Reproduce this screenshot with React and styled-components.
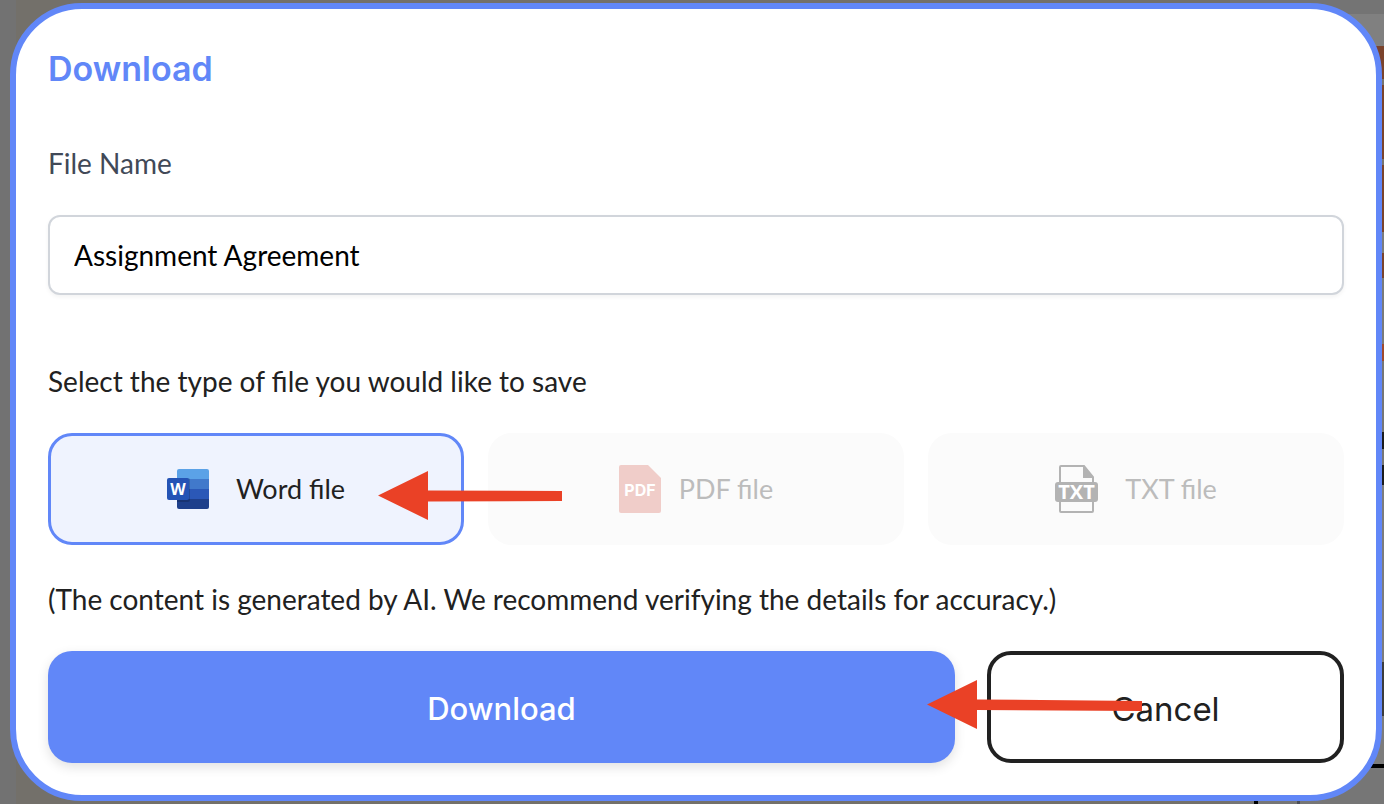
import React from 'react'
import styled, { createGlobalStyle, ThemeProvider } from 'styled-components'

const theme = {
  colors: {
    primary: '#6187f8',
    soft: '#eff3fe',
    text: '#212121',
    label: '#414957',
    border: '#d1d5db',
    arrow: '#ea4126',
  },
  body: 'Lato, "Open Sans", sans-serif',
  heading: 'Inter, Roboto, sans-serif',
}

const GlobalStyle = createGlobalStyle`
  * { box-sizing: border-box; }
  body {
    margin: 0;
    background: #73706a;
    font-family: ${({ theme }) => theme.body};
    color: ${({ theme }) => theme.colors.text};
  }
`

const Page = styled.div`
  display: grid;
  min-height: 100vh;
  overflow: hidden;
`

const Backdrop = styled.div`
  grid-area: 1 / 1;
  display: flex;
  justify-content: space-between;
`

const Rail = styled.div`
  width: 16px;
  background: #727272;
`

const Pane = styled.div`
  width: 154px;
  display: flex;
  flex-direction: column;
  background: #767676;
`

const Band = styled.div`
  height: ${({ $h }) => $h}px;
  background: ${({ $color }) => $color};
`

const Ticks = styled.div`
  display: flex;
  gap: 39px;
  padding-left: 24px;
  margin-top: auto;
`

const Tick = styled.div`
  width: ${({ $w }) => $w}px;
  height: 3px;
  background: ${({ $color }) => $color};
`

const Modal = styled.form`
  grid-area: 1 / 1;
  align-self: start;
  margin: 3px 2px 3px 10px;
  padding: 32px;
  border: 6px solid ${({ theme }) => theme.colors.primary};
  border-radius: 72px;
  background: #fff;
`

const Title = styled.h1`
  margin: 0 0 46px;
  font: 600 34px/56px ${({ theme }) => theme.heading};
  color: ${({ theme }) => theme.colors.primary};
`

const FieldLabel = styled.label`
  display: block;
  margin-bottom: 32px;
  font-size: 28px;
  line-height: 40px;
  color: ${({ theme }) => theme.colors.label};
`

const TextInput = styled.input`
  display: block;
  width: 100%;
  height: 80px;
  padding: 0 24px;
  border: 2px solid ${({ theme }) => theme.colors.border};
  border-radius: 12px;
  box-shadow: 0 2px 4px rgba(0, 0, 0, 0.05);
  background: #fff;
  font: 400 28px/40px ${({ theme }) => theme.body};
  color: #000;
  outline: none;
`

const FileTypes = styled.fieldset`
  margin: 66px 0 34px;
  padding: 0;
  border: 0;
`

const Legend = styled.legend`
  margin-bottom: 32px;
  padding: 0;
  font-size: 28px;
  line-height: 40px;
`

const Options = styled.div`
  display: grid;
  grid-template-columns: repeat(3, 1fr);
  gap: 24px;
`

const Option = styled.label`
  position: relative;
  z-index: ${({ $selected }) => ($selected ? 1 : 0)};
  display: flex;
  align-items: center;
  justify-content: center;
  gap: ${({ $gap }) => $gap}px;
  height: 112px;
  border: 3px solid ${({ $selected, theme }) => ($selected ? theme.colors.primary : 'transparent')};
  border-radius: 24px;
  background: ${({ $selected, theme }) => ($selected ? theme.colors.soft : '#fbfbfb')} border-box;
  font-size: 27px;
  line-height: 40px;
  color: ${({ $selected, theme }) => ($selected ? theme.colors.text : '#bcbcbc')};
  cursor: pointer;
`

const HiddenRadio = styled.input`
  position: absolute;
  opacity: 0;
  pointer-events: none;
`

const Note = styled.p`
  margin: 0 0 32px;
  font-size: 28px;
  line-height: 40px;
`

const Actions = styled.div`
  display: grid;
  grid-template-columns: 907fr 357fr;
  gap: 32px;
`

const Button = styled.button`
  position: relative;
  height: 112px;
  padding: 4px 0 0;
  border: 4px solid ${({ theme }) => theme.colors.text};
  border-radius: 24px;
  background: #fff;
  font: 400 33px/48px ${({ theme }) => theme.heading};
  color: ${({ theme }) => theme.colors.text};
  cursor: pointer;
`

const PrimaryButton = styled(Button)`
  border: 0;
  background: ${({ theme }) => theme.colors.primary};
  box-shadow: 0 4px 12px rgba(0, 0, 0, 0.12);
  font-weight: 500;
  font-size: 31px;
  color: #fff;
`

const Pointer = styled.svg`
  position: absolute;
  top: ${({ $top }) => $top}px;
  left: ${({ $left }) => $left};
  right: ${({ $right }) => $right};
  fill: ${({ theme }) => theme.colors.arrow};
  pointer-events: none;
`

function WordIcon() {
  return (
    <svg width="42" height="40" viewBox="0 0 42 40" aria-hidden="true">
      <path d="M12 0h28a2 2 0 0 1 2 2v8H10V2a2 2 0 0 1 2-2z" fill="#5ba2e7" />
      <path d="M10 10h32v10H10z" fill="#4179cb" />
      <path d="M10 20h32v10H10z" fill="#2b58b7" />
      <path d="M10 30h32v8a2 2 0 0 1-2 2H12a2 2 0 0 1-2-2z" fill="#1e3f8b" />
      <path d="M10 9h11a2 2 0 0 1 2 2v20a2 2 0 0 1-2 2H10z" fill="#000" opacity="0.18" />
      <rect y="9" width="22" height="22" rx="2" fill="#2453b5" />
      <text x="11" y="26" textAnchor="middle" fontFamily="Open Sans" fontWeight="700" fontSize="16" fill="#fff">W</text>
    </svg>
  )
}

function PdfIcon() {
  return (
    <svg width="42" height="48" viewBox="0 0 42 48" aria-hidden="true">
      <path d="M2 0h27l13 13v33a2 2 0 0 1-2 2H2a2 2 0 0 1-2-2V2a2 2 0 0 1 2-2z" fill="#f0cdc9" />
      <text x="21" y="31" textAnchor="middle" fontFamily="Inter" fontWeight="700" fontSize="16" fill="#fff">PDF</text>
    </svg>
  )
}

function TxtIcon() {
  return (
    <svg width="43" height="48" viewBox="0 0 43 48" aria-hidden="true">
      <path d="M6 1h23l9 11v34a1 1 0 0 1-1 1H6a1 1 0 0 1-1-1V2a1 1 0 0 1 1-1z" fill="none" stroke="#b3b3b3" strokeWidth="2" />
      <path d="M28 0l11 13H28z" fill="#b3b3b3" />
      <rect y="17" width="43" height="20" rx="3" fill="#b3b3b3" />
      <text x="21.5" y="34" textAnchor="middle" fontFamily="Open Sans" fontWeight="700" fontSize="20" fill="#fff">TXT</text>
    </svg>
  )
}

const fileTypes = [
  { id: 'word', name: 'Word file', icon: <WordIcon />, gap: 27 },
  { id: 'pdf', name: 'PDF file', icon: <PdfIcon />, gap: 18 },
  { id: 'txt', name: 'TXT file', icon: <TxtIcon />, gap: 27 },
]

const bands = [
  [14, '#747474'],
  [32, '#808080'],
  [33, '#7b432c'],
  [6, '#777472'],
  [74, '#7b432c'],
  [6, '#777472'],
  [67, '#7b432c'],
  [21, '#7c7c7c'],
  [25, '#7b432c'],
  [66, '#7a7a7a'],
  [17, '#a04a2c'],
  [71, '#767676'],
  [17, '#1c1c1c'],
  [16, '#767676'],
  [20, '#1c1c1c'],
  [177, '#7c7c7c'],
  [54, '#3c3c3c'],
  [48, '#7c7c7c'],
  [4, '#000'],
]

function Background() {
  return (
    <Backdrop aria-hidden="true">
      <Rail />
      <Pane>
        {bands.map(([h, color], i) => (
          <Band key={i} $h={h} $color={color} />
        ))}
        <Ticks>
          <Tick $w={4} $color="#000" />
          <Tick $w={3} $color="#4c4e56" />
        </Ticks>
      </Pane>
    </Backdrop>
  )
}

export default function App() {
  const [fileName, setFileName] = React.useState('Assignment Agreement')
  const [type, setType] = React.useState('word')

  return (
    <ThemeProvider theme={theme}>
      <GlobalStyle />
      <Page>
        <Background />
        <Modal onSubmit={(e) => e.preventDefault()}>
          <Title>Download</Title>

          <FieldLabel htmlFor="fileName">File Name</FieldLabel>
          <TextInput
            id="fileName"
            type="text"
            value={fileName}
            onChange={(e) => setFileName(e.target.value)}
          />

          <FileTypes>
            <Legend>Select the type of file you would like to save</Legend>
            <Options>
              {fileTypes.map((item) => (
                <Option key={item.id} $selected={type === item.id} $gap={item.gap}>
                  <HiddenRadio
                    type="radio"
                    name="fileType"
                    value={item.id}
                    checked={type === item.id}
                    onChange={() => setType(item.id)}
                  />
                  {item.icon}
                  <span>{item.name}</span>
                  {item.id === 'word' && (
                    <Pointer $top={35} $right="-101px" width="184" height="49" viewBox="0 0 184 49" aria-hidden="true">
                      <path d="M0 24.5L50 0v19.5l134 .5v10l-134 .5V49z" />
                    </Pointer>
                  )}
                </Option>
              ))}
            </Options>
          </FileTypes>

          <Note>(The content is generated by AI. We recommend verifying the details for accuracy.)</Note>

          <Actions>
            <PrimaryButton type="submit">Download</PrimaryButton>
            <Button type="button">
              Cancel
              <Pointer $top={25} $left="-64px" width="215" height="49" viewBox="0 0 215 49" aria-hidden="true">
                <path d="M0 24.5L50 0v19.5l165 1.5v10l-165-1V49z" />
              </Pointer>
            </Button>
          </Actions>
        </Modal>
      </Page>
    </ThemeProvider>
  )
}
